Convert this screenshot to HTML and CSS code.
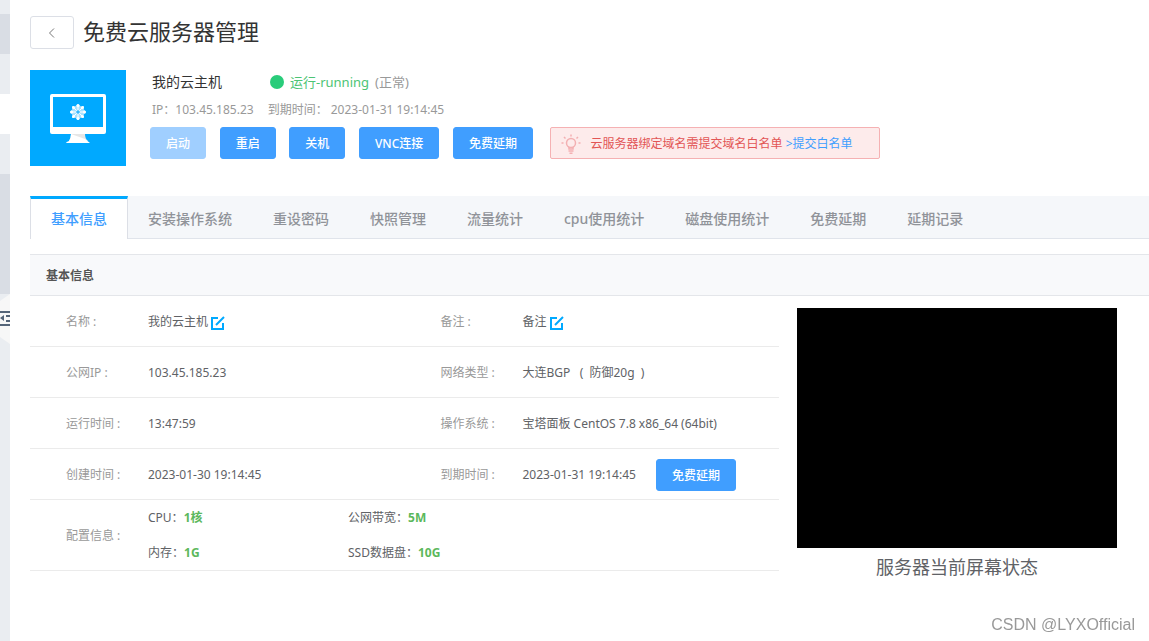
FILE: index.html
```html
<!DOCTYPE html>
<html lang="zh-CN">
<head>
<meta charset="utf-8">
<title>免费云服务器管理</title>
<link rel="stylesheet" href="styles.css">
</head>
<body>
<div class="layout">
  <aside class="rail">
    <div class="rail-item rail-head"></div>
    <div class="rail-item dark"></div>
    <div class="rail-item"></div>
    <div class="rail-item active"></div>
    <div class="rail-item"></div>
    <div class="rail-item dark tall"></div>
    <svg class="rail-handle" width="10" height="50" viewBox="0 0 10 50" aria-hidden="true">
      <path d="M0 7L10 0V50L0 43z" fill="#f7f7f7"/>
      <path d="M0 17h10v2H0zM0 30h10v2H0zM6 21h4v2H6zM6 26h4v2H6zM0 24l4-3v6z" fill="#546478"/>
    </svg>
  </aside>
  <main class="content">
    <header class="page-head">
      <button class="back" type="button" aria-label="返回">
        <svg width="10" height="12" viewBox="0 0 10 12" fill="none" stroke="#777"><path d="M7 1.500L2.500 6L7 10.500"/></svg>
      </button>
      <h1 class="page-title">免费云服务器管理</h1>
    </header>

    <section class="host">
      <svg class="host-logo" width="96" height="96" viewBox="0 0 96 96" aria-hidden="true">
        <path fill="#00a9ff" d="M0 0h96v96H0z"/>
        <path fill="#fff" fill-rule="evenodd" d="M22 24h52q2 0 2 2v36q0 2-2 2H22q-2 0-2-2V26q0-2 2-2zM23 27v30h50V27z"/>
        <path fill="#e6e6e6" d="M41 64h14q0 5 3 7H39q2-3 2-7z"/>
        <path fill="#fff" d="M41 64l14 5 5 4H36q0-1 3-2 2-3 2-7z"/>
        <path fill="#a9e2ff" d="M48 34l3 2.500 3-.5-.5 3L56 42l-2.500 3 .5 3-3-.5-3 2.500-3-2.500-3 .5.5-3L40 42l2.500-3-.5-3 3 .5z"/>
        <g fill="#fff">
          <circle cx="48" cy="35.500" r="1.500"/><circle cx="52.500" cy="37.500" r="1.500"/>
          <circle cx="54.500" cy="42" r="1.500"/><circle cx="52.500" cy="46.500" r="1.500"/>
          <circle cx="48" cy="48.500" r="1.500"/><circle cx="43.500" cy="46.500" r="1.500"/>
          <circle cx="41.500" cy="42" r="1.500"/><circle cx="43.500" cy="37.500" r="1.500"/>
        </g>
        <path stroke="#fff" d="M48 36v12M42 42h12M44 38l8 8M52 38l-8 8"/>
        <circle cx="48" cy="42" r="1.800" fill="#35b8ff"/>
      </svg>
      <div class="host-info">
        <div class="host-line">
          <span class="host-name">我的云主机</span>
          <span class="status"><i class="dot"></i>运行-running</span>
          <span class="health">(正常)</span>
        </div>
        <div class="host-meta">
          <span>IP：103.45.185.23</span>
          <span>到期时间： 2023-01-31 19:14:45</span>
        </div>
        <div class="actions">
          <button class="btn" type="button" disabled>启动</button>
          <button class="btn" type="button">重启</button>
          <button class="btn" type="button">关机</button>
          <button class="btn" type="button">VNC连接</button>
          <button class="btn" type="button">免费延期</button>
          <div class="notice">
            <svg width="20" height="20" viewBox="0 0 20 20" fill="none" stroke="#f3b0b2" stroke-width="1.500" aria-hidden="true">
              <circle cx="10" cy="9" r="4.500"/>
              <path d="M8 13v2h4v-2M7.500 17h5M8.500 19.200h3M10 .5v2M3 3l1.500 1.500M17 3l-1.500 1.500M.5 9h2M17.500 9h2"/>
            </svg>
            <span>云服务器绑定域名需提交域名白名单 <a href="#">&gt;提交白名单</a></span>
          </div>
        </div>
      </div>
    </section>

    <nav class="tabs">
      <a class="tab current" href="#">基本信息</a>
      <a class="tab" href="#">安装操作系统</a>
      <a class="tab" href="#">重设密码</a>
      <a class="tab" href="#">快照管理</a>
      <a class="tab" href="#">流量统计</a>
      <a class="tab" href="#">cpu使用统计</a>
      <a class="tab" href="#">磁盘使用统计</a>
      <a class="tab" href="#">免费延期</a>
      <a class="tab" href="#">延期记录</a>
    </nav>

    <section class="panel">
      <h2 class="panel-title">基本信息</h2>
      <div class="panel-body">
        <div class="info-wrap">
          <table class="info">
            <colgroup><col class="col-label"><col><col class="col-label"><col></colgroup>
            <tbody>
              <tr>
                <th scope="row">名称 :</th>
                <td>我的云主机<button class="edit" type="button" aria-label="编辑名称"><svg width="14" height="14" viewBox="0 0 14 14" fill="none" stroke="#00a9ff" stroke-width="2"><path d="M7 2H1v11h11V7M5 9L13 1"/></svg></button></td>
                <th scope="row">备注 :</th>
                <td>备注<button class="edit" type="button" aria-label="编辑备注"><svg width="14" height="14" viewBox="0 0 14 14" fill="none" stroke="#00a9ff" stroke-width="2"><path d="M7 2H1v11h11V7M5 9L13 1"/></svg></button></td>
              </tr>
              <tr>
                <th scope="row">公网IP :</th>
                <td>103.45.185.23</td>
                <th scope="row">网络类型 :</th>
                <td>大连BGP &nbsp;&nbsp;( &nbsp;防御20g &nbsp;)</td>
              </tr>
              <tr>
                <th scope="row">运行时间 :</th>
                <td>13:47:59</td>
                <th scope="row">操作系统 :</th>
                <td>宝塔面板 CentOS 7.8 x86_64 (64bit)</td>
              </tr>
              <tr>
                <th scope="row">创建时间 :</th>
                <td>2023-01-30 19:14:45</td>
                <th scope="row">到期时间 :</th>
                <td><div class="expiry">2023-01-31 19:14:45<button class="btn" type="button">免费延期</button></div></td>
              </tr>
              <tr>
                <th scope="row">配置信息 :</th>
                <td class="spec-cell" colspan="3">
                  <div class="specs">
                    <span>CPU：<b>1核</b></span>
                    <span>公网带宽：<b>5M</b></span>
                    <span>内存：<b>1G</b></span>
                    <span>SSD数据盘：<b>10G</b></span>
                  </div>
                </td>
              </tr>
            </tbody>
          </table>
        </div>
        <figure class="screen">
          <div class="screen-view"></div>
          <figcaption>服务器当前屏幕状态</figcaption>
        </figure>
      </div>
    </section>
  </main>
</div>
<div class="watermark">CSDN @LYXOfficial</div>
</body>
</html>
```
FILE: styles.css
```css
* { box-sizing: border-box; }

body {
  margin: 0;
  background: #fff;
  color: #606266;
  font: 12px/20px "Noto Sans", "Noto Sans CJK SC", sans-serif;
}

a { color: #409eff; text-decoration: none; }
button { font-family: inherit; cursor: pointer; }
svg { display: block; }

.layout { display: flex; min-height: 100vh; }

.rail { flex: none; width: 10px; background: #eaedf1; }
.rail-item { height: 40px; }
.rail-head { height: 14px; }
.dark { background: #d9dde4; }
.active { background: #fff; }
.tall { height: 120px; }

.content { flex: 1; min-width: 0; padding: 16px 0 16px 20px; }

.page-head { display: flex; align-items: flex-start; gap: 9px; }
.back {
  display: flex;
  align-items: center;
  justify-content: center;
  width: 44px;
  height: 33px;
  padding: 0;
  background: #fff;
  border: 1px solid #dcdfe6;
  border-radius: 3px;
}
.page-title { margin: 0; color: #333; font-size: 22px; font-weight: 400; line-height: 30px; }

.host { display: flex; gap: 24px; margin-top: 21px; }
.host-logo { flex: none; }
.host-info { flex: 1; min-width: 0; }
.host-line { display: flex; align-items: center; height: 24px; padding-left: 2px; font-size: 13px; }
.host-name { width: 118px; color: #333; font-size: 14px; }
.status { display: flex; align-items: center; gap: 6px; color: #4cc474; }
.dot { width: 14px; height: 14px; border-radius: 50%; background: #29cc7a; }
.health { margin-left: 6px; color: #999; }
.host-meta { display: flex; gap: 14px; height: 32px; padding: 6px 0 0 2px; color: #999; }
.actions { font-size: 14px; line-height: 32px; }

.btn {
  height: 32px;
  padding: 2px 15px 0;
  background: #409eff;
  border: 1px solid #409eff;
  border-radius: 3px;
  color: #fff;
  font-size: 12px;
  font-weight: 500;
  line-height: 28px;
  vertical-align: middle;
}
.actions .btn + .btn { margin-left: 10px; }
.btn:disabled { background: #a0cfff; border-color: #a0cfff; }

.notice {
  display: inline-flex;
  align-items: center;
  gap: 10px;
  width: 330px;
  height: 32px;
  margin-left: 13px;
  padding: 2px 10px 0;
  background: #fdebeb;
  border: 1px solid #f5b1b3;
  border-radius: 2px;
  color: #e25555;
  font-size: 12px;
  vertical-align: middle;
}

.tabs {
  display: flex;
  margin-top: 30px;
  height: 43px;
  background: #f5f7fa;
  border-bottom: 1px solid #e0e4eb;
}
.tab {
  height: 43px;
  padding: 0 20px;
  border-right: 1px solid transparent;
  color: #909399;
  font-size: 14px;
  font-weight: 500;
  line-height: 46px;
}
.tab.current {
  background: #fff;
  border: solid #dcdfe6;
  border-width: 3px 1px 0;
  border-top-color: #00a9ff;
  color: #409eff;
  line-height: 40px;
}

.panel { margin-top: 15px; }
.panel-title {
  margin: 0;
  padding: 2px 16px 0;
  background: #f8f9fb;
  border: solid #e4e6ea;
  border-width: 1px 0;
  color: #555;
  font-size: 12px;
  font-weight: 700;
  line-height: 38px;
}
.panel-body { display: flex; align-items: flex-start; gap: 18px; }

.info-wrap { flex: 1; min-width: 0; }
.info { width: 100%; border-spacing: 0; table-layout: fixed; }
.col-label { width: 118px; }
.info th, .info td { height: 51px; padding: 2px 0 0; border-bottom: 1px solid #ebebeb; }
.info th { padding-left: 36px; color: #999; font-weight: 400; text-align: left; }
.info .spec-cell { padding: 0; }
.edit { margin-left: 3px; padding: 0; border: 0; background: none; vertical-align: text-bottom; }
.expiry { display: flex; align-items: center; gap: 20px; }
.specs { display: grid; grid-template-columns: 200px 1fr; line-height: 35px; }
.specs b { color: #5cb85c; }

.screen { flex: none; width: 320px; margin: 12px 32px 0 0; text-align: center; font-size: 18px; line-height: 38px; }
.screen-view { aspect-ratio: 4 / 3; background: #000; }

.watermark {
  position: fixed;
  right: 14px;
  bottom: 4px;
  color: #999;
  font: 16px/24px "Liberation Sans", sans-serif;
}
```
